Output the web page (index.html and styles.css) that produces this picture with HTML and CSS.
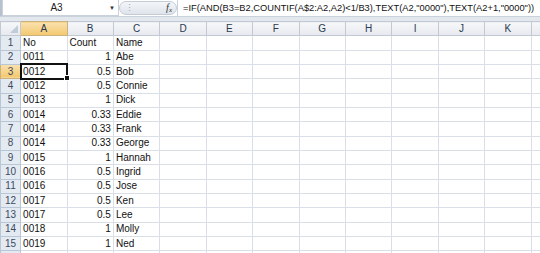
FILE: index.html
```html
<!DOCTYPE html>
<html lang="en">
<head>
  <meta charset="UTF-8">
  <title>Book1 - Sheet1</title>
  <link rel="stylesheet" href="styles.css">
</head>
<body>
  <div class="formula-bar">
    <div class="name-box">
      <span class="name">A3</span>
      <span class="drop">&#9660;</span>
    </div>
    <div class="grip">
      <span class="dots">&#8942;</span>
      <span class="fx">f<sub>x</sub></span>
    </div>
    <div class="formula">=IF(AND(B3=B2,COUNTIF(A$2:A2,A2)&lt;1/B3),TEXT(A2,"0000"),TEXT(A2+1,"0000"))</div>
  </div>
  <div class="strip"></div>

  <div class="sheet-wrap">
  <table class="sheet">
    <colgroup>
      <col class="rh">
      <col><col><col><col><col><col><col><col><col><col><col><col>
    </colgroup>
    <tr class="head">
      <th class="corner"><span class="tri"></span></th>
      <th class="sel">A</th><th>B</th><th>C</th><th>D</th><th>E</th><th>F</th>
      <th>G</th><th>H</th><th>I</th><th>J</th><th>K</th><th></th>
    </tr>
    <tr><th>1</th><td>No</td><td>Count</td><td>Name</td><td></td><td></td><td></td><td></td><td></td><td></td><td></td><td></td><td></td></tr>
    <tr><th>2</th><td>0011</td><td class="num">1</td><td>Abe</td><td></td><td></td><td></td><td></td><td></td><td></td><td></td><td></td><td></td></tr>
    <tr><th class="sel">3</th><td class="active">0012<span class="handle"></span></td><td class="num">0.5</td><td>Bob</td><td></td><td></td><td></td><td></td><td></td><td></td><td></td><td></td><td></td></tr>
    <tr><th>4</th><td>0012</td><td class="num">0.5</td><td>Connie</td><td></td><td></td><td></td><td></td><td></td><td></td><td></td><td></td><td></td></tr>
    <tr><th>5</th><td>0013</td><td class="num">1</td><td>Dick</td><td></td><td></td><td></td><td></td><td></td><td></td><td></td><td></td><td></td></tr>
    <tr><th>6</th><td>0014</td><td class="num">0.33</td><td>Eddie</td><td></td><td></td><td></td><td></td><td></td><td></td><td></td><td></td><td></td></tr>
    <tr><th>7</th><td>0014</td><td class="num">0.33</td><td>Frank</td><td></td><td></td><td></td><td></td><td></td><td></td><td></td><td></td><td></td></tr>
    <tr><th>8</th><td>0014</td><td class="num">0.33</td><td>George</td><td></td><td></td><td></td><td></td><td></td><td></td><td></td><td></td><td></td></tr>
    <tr><th>9</th><td>0015</td><td class="num">1</td><td>Hannah</td><td></td><td></td><td></td><td></td><td></td><td></td><td></td><td></td><td></td></tr>
    <tr><th>10</th><td>0016</td><td class="num">0.5</td><td>Ingrid</td><td></td><td></td><td></td><td></td><td></td><td></td><td></td><td></td><td></td></tr>
    <tr><th>11</th><td>0016</td><td class="num">0.5</td><td>Jose</td><td></td><td></td><td></td><td></td><td></td><td></td><td></td><td></td><td></td></tr>
    <tr><th>12</th><td>0017</td><td class="num">0.5</td><td>Ken</td><td></td><td></td><td></td><td></td><td></td><td></td><td></td><td></td><td></td></tr>
    <tr><th>13</th><td>0017</td><td class="num">0.5</td><td>Lee</td><td></td><td></td><td></td><td></td><td></td><td></td><td></td><td></td><td></td></tr>
    <tr><th>14</th><td>0018</td><td class="num">1</td><td>Molly</td><td></td><td></td><td></td><td></td><td></td><td></td><td></td><td></td><td></td></tr>
    <tr><th>15</th><td>0019</td><td class="num">1</td><td>Ned</td><td></td><td></td><td></td><td></td><td></td><td></td><td></td><td></td><td></td></tr>
    <tr><th></th><td></td><td></td><td></td><td></td><td></td><td></td><td></td><td></td><td></td><td></td><td></td><td></td></tr>
  </table>
  </div>
</body>
</html>
```

FILE: styles.css
```css
html, body {
  margin: 0;
  padding: 0;
  overflow: hidden;
  background: #fff;
}
body {
  font-family: "Liberation Sans", Arial, sans-serif;
  width: 540px;
  height: 253px;
}

/* formula bar */
.formula-bar {
  display: flex;
  height: 16px;
  background: #fff;
  border-left: 2px solid #b8c2ce;
}
.name-box {
  width: 117px;
  display: flex;
  align-items: center;
  border: 1px solid #c9d1db;
  border-top: none;
  box-sizing: border-box;
}
.name {
  flex: 1;
  text-align: center;
  font-size: 10px;
  color: #222;
  padding-left: 4px;
}
.drop {
  font-size: 6px;
  color: #333;
  width: 12px;
  text-align: center;
}
.grip {
  width: 58px;
  display: flex;
  align-items: center;
  justify-content: space-between;
  padding: 0 4px 0 5px;
  box-sizing: border-box;
  margin-top: 1px;
  height: 14px;
  border: 1px solid #c4ccd8;
  border-radius: 8px;
  background: linear-gradient(#f3f5f8, #dfe4eb);
}
.dots {
  font-size: 9px;
  color: #9aa6b6;
}
.fx {
  font-family: "Liberation Serif", serif;
  font-style: italic;
  font-size: 10px;
  color: #333;
}
.fx sub {
  font-size: 7px;
  vertical-align: -1px;
}
.formula {
  flex: 1;
  padding-left: 5px;
  font-size: 9.3px;
  line-height: 16px;
  color: #111;
  white-space: nowrap;
  overflow: hidden;
  border-left: 1px solid #c9d1db;
}
.strip {
  height: 4px;
  background: #e3e8ee;
  border-top: 1px solid #c9d1db;
}

/* sheet grid */
.sheet-wrap {
  overflow: hidden;
  height: 233px;
}
.sheet {
  border-collapse: collapse;
  table-layout: fixed;
  width: 578px;
  font-size: 10px;
}
.sheet col {
  width: 46.2px;
}
.sheet col.rh {
  width: 20px;
}
.sheet tr {
  height: 14.33px;
}
.sheet td {
  border: 1px solid #dadfe7;
  padding: 0 2px;
  color: #111;
  white-space: nowrap;
  line-height: 12px;
}
.sheet td.num {
  text-align: right;
}
.sheet th {
  font-weight: normal;
  color: #3c4a5c;
  border: 1px solid #b9c6d6;
  background: #e4eaf2;
  padding: 0;
  line-height: 12px;
  font-size: 10px;
}
.sheet tr.head th {
  background: linear-gradient(#f6f7f9, #e6e9ee);
  border-color: #c2c9d3;
  color: #2b3a4f;
  height: 13px;
}
.sheet th.sel,
.sheet tr.head th.sel {
  background: linear-gradient(#fae1ae, #f3c86e);
  border-color: #c9b27e;
}
.corner {
  position: relative;
}
.tri {
  position: absolute;
  right: 2px;
  bottom: 2px;
  border-left: 8px solid transparent;
  border-bottom: 8px solid #c2cbd8;
}
.sheet td.active {
  outline: 2px solid #111;
  outline-offset: -1px;
  position: relative;
}
.handle {
  position: absolute;
  right: -3px;
  bottom: -3px;
  width: 4px;
  height: 4px;
  background: #111;
  border: 1px solid #fff;
}
```
